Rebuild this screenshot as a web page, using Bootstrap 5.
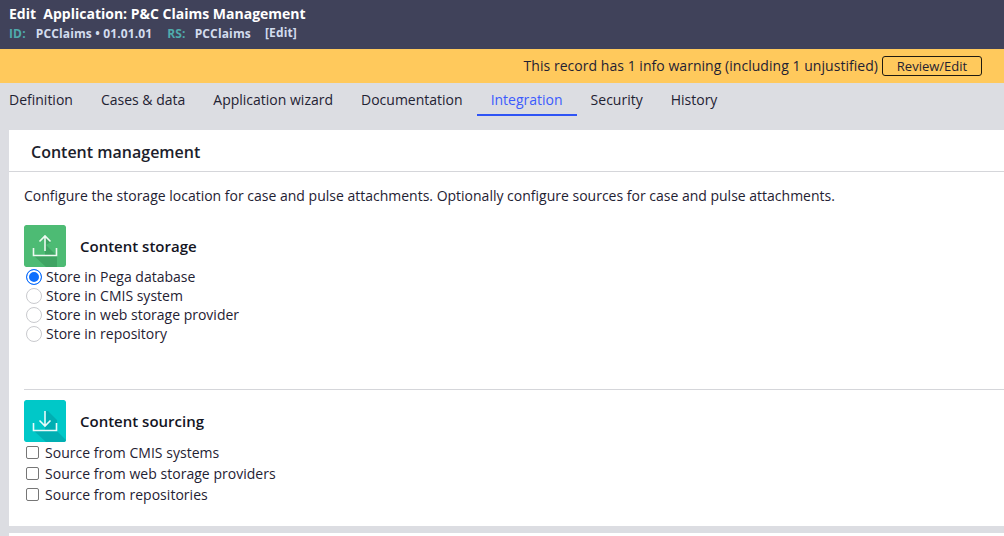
<!DOCTYPE html>
<html lang="en">

<head>
    <meta charset="UTF-8">
    <meta name="viewport" content="width=device-width, initial-scale=1.0">
    <title>Edit Application</title>
    <link href="https://cdn.jsdelivr.net/npm/bootstrap@5.3.0/dist/css/bootstrap.min.css" rel="stylesheet">
    <script src="https://cdn.jsdelivr.net/npm/bootstrap@5.3.0/dist/js/bootstrap.bundle.min.js"></script>
    <style>
        html, body { height: 536px; overflow: hidden; }
        body { background: #dcdde2; font-family: "Open Sans", sans-serif; font-size: 14px; color: #1f2233; }
        .head-bar { background: #40425a; height: 49px; padding: 5px 9px 0; color: #fff; }
        .head-title { font-size: 14px; font-weight: 700; line-height: 17px; white-space: pre; }
        .head-sub { font-size: 12px; font-weight: 700; line-height: 16px; margin-top: 4px; color: #d3dcee; letter-spacing: .14px; }
        .head-sub .key { color: #4fabad; }
        .head-sub .gap-id { margin-left: 10px; }
        .head-sub .gap-rs { margin-left: 15px; }
        .head-sub .gap-val { margin-left: 9px; }
        .head-sub .gap-edit { margin-left: 14px; transform: translateY(-1px); }
        .warn-bar { background: #ffc95c; height: 34px; padding-right: 22px; letter-spacing: .04px; }
        .warn-text { margin-top: -2px; }
        .warn-btn { width: 100px; height: 20px; padding: 0; font-size: 13px; line-height: 18px; color: #1f2233; background: transparent; border: 1px solid #1f1a10; border-radius: 3px; margin-left: 4px; }
        .tab-row { height: 47px; padding-left: 9px; }
        .tab-row .nav-link { color: #1f2233; font-size: 14px; line-height: 19px; padding: 7px 14px 6px; height: 33px; border-bottom: 2px solid transparent; }
        .tab-row .nav-item:first-child .nav-link { padding-left: 0; padding-right: 14px; }
        .tab-row .nav-link.active { color: #3b5bfd; border-bottom-color: #2f54f5; }
        .panel { background: #fff; margin-left: 9px; height: 396px; }
        .panel-head { height: 42px; border-bottom: 1px solid #d5d6da; padding-left: 22px; font-size: 16px; font-weight: 600; line-height: 45px; color: #1c1e2c; }
        .panel-body { padding: 14px 0 0 15px; }
        .panel-intro { line-height: 19px; margin-bottom: 20px; }
        .tile { width: 42px; height: 42px; border-radius: 2px; flex: none; }
        .section-name { font-size: 15px; font-weight: 600; margin-left: 14px; color: #14151f; }
        .radio-line { height: 19px; }
        .radio-line .form-check-input { width: 16px; height: 16px; margin: 0 4px 0 2px; flex: none; border-color: #c9cace; }
        .radio-line .form-check-input:checked { background-image: none; background-color: #0d6efd; border-color: #0d6efd; box-shadow: inset 0 0 0 2px #fff; }
        .check-line { height: 21px; letter-spacing: .03px; }
        .check-line .form-check-input { width: 13px; height: 13px; margin: 0 6px 0 2px; flex: none; border-color: #767676; border-radius: 2px; }
        .rule-line { margin: 46px 0 10px; border-top: 1px solid #d5d6da; }
        .foot-strip { background: #fff; margin-left: 9px; margin-top: 7px; height: 10px; }
    </style>
</head>

<body>
    <div class="head-bar">
        <div class="head-title">Edit  Application: P&amp;C Claims Management</div>
        <div class="head-sub d-flex">
            <span class="key">ID:</span>
            <span class="gap-id">PCClaims • 01.01.01</span>
            <span class="key gap-rs">RS:</span>
            <span class="gap-val">PCClaims</span>
            <span class="gap-edit">[Edit]</span>
        </div>
    </div>

    <div class="warn-bar d-flex align-items-center justify-content-end">
        <span class="warn-text">This record has 1 info warning (including 1 unjustified)</span>
        <button type="button" class="btn warn-btn">Review/Edit</button>
    </div>

    <ul class="nav tab-row">
        <li class="nav-item"><a class="nav-link" href="#">Definition</a></li>
        <li class="nav-item"><a class="nav-link" href="#">Cases &amp; data</a></li>
        <li class="nav-item"><a class="nav-link" href="#">Application wizard</a></li>
        <li class="nav-item"><a class="nav-link" href="#">Documentation</a></li>
        <li class="nav-item"><a class="nav-link active" href="#">Integration</a></li>
        <li class="nav-item"><a class="nav-link" href="#">Security</a></li>
        <li class="nav-item"><a class="nav-link" href="#">History</a></li>
    </ul>

    <div class="panel">
        <div class="panel-head">Content management</div>
        <div class="panel-body">
            <div class="panel-intro">Configure the storage location for case and pulse attachments. Optionally configure sources for case and pulse attachments.</div>

            <div class="d-flex align-items-center">
                <svg class="tile" viewBox="0 0 42 42">
                    <rect width="42" height="42" rx="2" fill="#4dbb74"/>
                    <path d="M21 11 L27 17 L22 20 L33 31 V42 H22 L9 30 L21 30Z" fill="#3fa463"/>
                    <path d="M9.500 23v7.500h23V23M21 26V11M15.500 16.500L21 11l5.500 5.500" fill="none" stroke="#eef9f2" stroke-width="1.600"/>
                </svg>
                <span class="section-name">Content storage</span>
            </div>
            <div class="radio-line d-flex align-items-center"><input class="form-check-input mt-0" type="radio" name="store" id="s1" checked><label for="s1">Store in Pega database</label></div>
            <div class="radio-line d-flex align-items-center"><input class="form-check-input mt-0" type="radio" name="store" id="s2"><label for="s2">Store in CMIS system</label></div>
            <div class="radio-line d-flex align-items-center"><input class="form-check-input mt-0" type="radio" name="store" id="s3"><label for="s3">Store in web storage provider</label></div>
            <div class="radio-line d-flex align-items-center"><input class="form-check-input mt-0" type="radio" name="store" id="s4"><label for="s4">Store in repository</label></div>

            <div class="rule-line"></div>

            <div class="d-flex align-items-center">
                <svg class="tile" viewBox="0 0 42 42">
                    <rect width="42" height="42" rx="2" fill="#00c8c8"/>
                    <path d="M24 11 L33 20 V31 L42 40 V42 H22 L9 30 H21 L21 11Z" fill="#00aeb2"/>
                    <path d="M9.500 23v7.500h23V23M21 11v15M15.500 20.500L21 26l5.500-5.500" fill="none" stroke="#e9fafa" stroke-width="1.600"/>
                </svg>
                <span class="section-name">Content sourcing</span>
            </div>
            <div class="check-line d-flex align-items-center"><input class="form-check-input mt-0" type="checkbox" id="c1"><label for="c1">Source from CMIS systems</label></div>
            <div class="check-line d-flex align-items-center"><input class="form-check-input mt-0" type="checkbox" id="c2"><label for="c2">Source from web storage providers</label></div>
            <div class="check-line d-flex align-items-center"><input class="form-check-input mt-0" type="checkbox" id="c3"><label for="c3">Source from repositories</label></div>
        </div>
    </div>
    <div class="foot-strip"></div>
</body>

</html>
